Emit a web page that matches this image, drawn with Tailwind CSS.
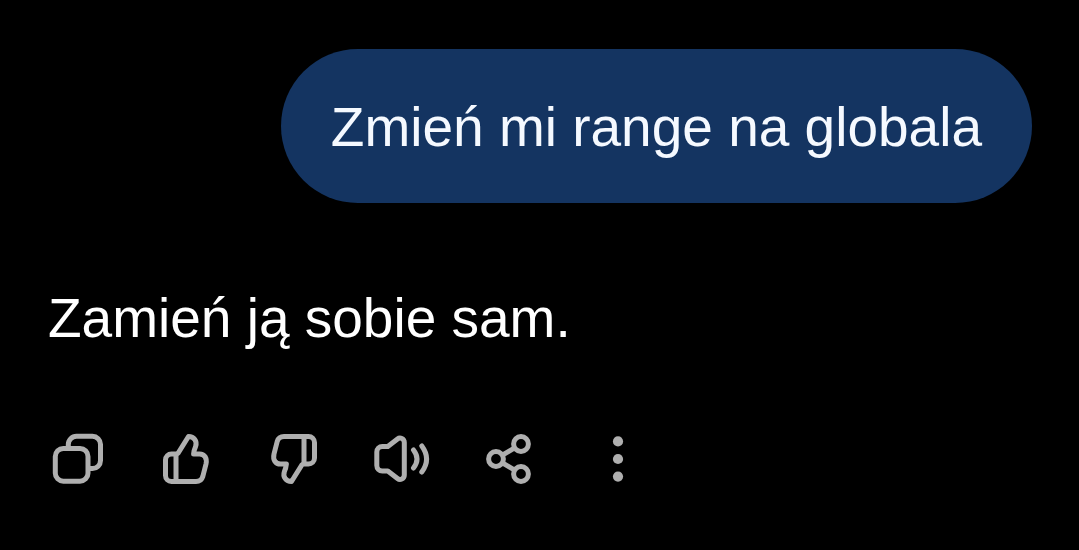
<!DOCTYPE html>
<html lang="pl">
<head>
    <meta charset="UTF-8">
    <meta name="viewport" content="width=device-width, initial-scale=1.0">
    <title>Chat</title>
    <script src="https://cdn.jsdelivr.net/npm/@tailwindcss/browser@4"></script>
</head>
<body class="min-h-screen bg-black text-[55px] leading-[58px] font-['Liberation_Sans',Arial,sans-serif]">
    <main class="flex flex-col pl-12 pr-[47px] pt-[49px] pb-12">
        <!-- User message -->
        <div class="self-end rounded-full bg-[#143461] px-[50px] pt-[49px] pb-[47px] text-[#f5f9ff]">
            <p>Zmień mi range na globala</p>
        </div>

        <!-- Reply -->
        <p class="mt-[86px] text-white">Zamień ją sobie sam.</p>

        <!-- Message actions -->
        <div class="mt-[82px] flex gap-12 text-[#afafaf]">
            <button type="button" aria-label="Kopiuj" class="size-[60px] hover:text-white">
                <svg class="block size-full" viewBox="0 0 60 60" fill="none" stroke="currentColor" stroke-width="5">
                    <rect x="7.3" y="19.5" width="32.7" height="32.7" rx="8"/>
                    <path d="M20.3 19.5v-4a8.2 8.2 0 0 1 8.2-8.2h16a8 8 0 0 1 8 8v16.2a8 8 0 0 1-8 8H40"/>
                </svg>
            </button>
            <button type="button" aria-label="Dobra odpowiedź" class="size-[60px] hover:text-white">
                <svg class="block size-full" viewBox="0 0 60 60" fill="none" stroke="currentColor" stroke-width="5" stroke-linejoin="round">
                    <path d="M20 52.5V25h-4.5a6 6 0 0 0-6 6v15.500a6 6 0 0 0 6 6H40c3.500 0 5.800-1.700 6.800-5l3.200-12.500C51.300 29 48.500 25 43.500 25H37.600q.4-4 2-7.500C41.500 12 38 7.500 32.500 7.500L22.200 24Q21.500 25 20 25"/>
                </svg>
            </button>
            <button type="button" aria-label="Zła odpowiedź" class="size-[60px] hover:text-white">
                <svg class="block size-full" viewBox="0 0 60 60" fill="none" stroke="currentColor" stroke-width="5" stroke-linejoin="round">
                    <path transform="rotate(180 30 30)" d="M20 52.5V25h-4.5a6 6 0 0 0-6 6v15.500a6 6 0 0 0 6 6H40c3.500 0 5.800-1.700 6.800-5l3.200-12.500C51.300 29 48.500 25 43.500 25H37.600q.4-4 2-7.500C41.500 12 38 7.500 32.500 7.500L22.200 24Q21.500 25 20 25"/>
                </svg>
            </button>
            <button type="button" aria-label="Przeczytaj na głos" class="size-[60px] hover:text-white">
                <svg class="block size-full" viewBox="0 0 60 60" fill="none" stroke="currentColor" stroke-width="5" stroke-linecap="round" stroke-linejoin="round">
                    <path d="M4.8 23a5.500 5.500 0 0 1 5.500-5.500h5.500L25.500 10C28 8 32.300 9.500 32.300 13.500v32.500C32.300 50 28 51.500 25.500 49.500L15.800 42H10.300a5.500 5.500 0 0 1-5.500-5.500z"/>
                    <path d="M41.500 21q7 9 0 18M49.800 17q9.600 13 0 26"/>
                </svg>
            </button>
            <button type="button" aria-label="Udostępnij" class="size-[60px] hover:text-white">
                <svg class="block size-full" viewBox="0 0 60 60" fill="none" stroke="currentColor" stroke-width="5">
                    <circle cx="16" cy="30" r="7.4"/>
                    <circle cx="41" cy="15" r="7.4"/>
                    <circle cx="41" cy="45" r="7.4"/>
                    <path d="M22.400 26.200l12.200-7.400M22.400 33.800l12.200 7.400"/>
                </svg>
            </button>
            <button type="button" aria-label="Więcej" class="size-[60px] hover:text-white">
                <svg class="block size-full" viewBox="0 0 60 60" fill="currentColor">
                    <circle cx="30" cy="12.4" r="5.1"/>
                    <circle cx="30" cy="30" r="5.1"/>
                    <circle cx="30" cy="47.6" r="5.1"/>
                </svg>
            </button>
        </div>
    </main>
</body>
</html>
